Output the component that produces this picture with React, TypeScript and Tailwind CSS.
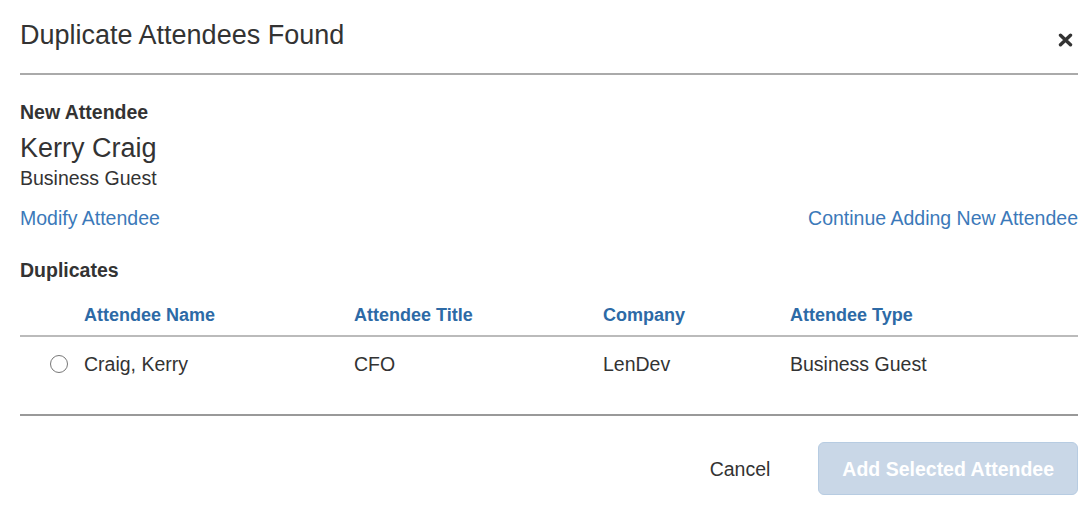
import { useState } from "react";

type Duplicate = {
  name: string;
  title: string;
  company: string;
  type: string;
};

const duplicates: Duplicate[] = [
  { name: "Craig, Kerry", title: "CFO", company: "LenDev", type: "Business Guest" }
];

const gridCols = "grid grid-cols-[64px_270px_249px_187px_1fr]";

function CloseIcon() {
  return (
    <svg aria-hidden="true" className="h-[14px] w-[15px]" viewBox="0 0 15 14">
      <path
        d="M2.5 2.2 L12.5 11.8 M12.5 2.2 L2.5 11.8"
        fill="none"
        stroke="#333333"
        strokeLinecap="round"
        strokeWidth="3.4"
      />
    </svg>
  );
}

export default function App() {
  const [selected, setSelected] = useState<number | null>(null);

  return (
    <div className="min-h-screen bg-white pl-[20px] pr-[9px] font-['Liberation_Sans',Arial,sans-serif] text-[#333333]">
      <div className="flex items-start justify-between border-b-2 border-[#aaaaaa] pb-[22px] pt-[19px]">
        <h1 className="text-[27px] leading-[32px]">Duplicate Attendees Found</h1>
        <button className="mr-[5px] mt-[14px]" type="button" aria-label="Close">
          <CloseIcon />
        </button>
      </div>

      <p className="mt-[26px] text-[19.5px] font-bold leading-[22px]">New Attendee</p>
      <p className="mt-[9px] text-[27px] leading-[33px]">Kerry Craig</p>
      <p className="mt-[2px] text-[19.5px] leading-[22px]">Business Guest</p>

      <div className="mt-[18px] flex justify-between text-[19.5px] leading-[22px] text-[#3b79b9]">
        <a href="#">Modify Attendee</a>
        <a href="#">Continue Adding New Attendee</a>
      </div>

      <p className="mt-[30px] text-[19.5px] font-bold leading-[22px]">Duplicates</p>

      <div className="mt-[23px]">
        <div
          className={`${gridCols} border-b-2 border-[#bbbbbb] pb-[9px] text-[18px] font-bold leading-[22px] text-[#2d6aa6]`}
        >
          <span />
          <span>Attendee Name</span>
          <span>Attendee Title</span>
          <span>Company</span>
          <span>Attendee Type</span>
        </div>

        {duplicates.map((row, index) => (
          <label
            className={`${gridCols} items-center pb-[39px] pt-[16px] text-[19.5px] leading-[22px]`}
            key={row.name}
          >
            <span className="flex pl-[30px]">
              <input
                checked={selected === index}
                className="peer sr-only"
                name="duplicate"
                onChange={() => setSelected(index)}
                type="radio"
              />
              <span className="flex h-[18px] w-[18px] items-center justify-center rounded-full border-[1.5px] border-[#777777] bg-white">
                {selected === index ? (
                  <span className="h-[8px] w-[8px] rounded-full bg-[#333333]" />
                ) : null}
              </span>
            </span>
            <span>{row.name}</span>
            <span>{row.title}</span>
            <span>{row.company}</span>
            <span>{row.type}</span>
          </label>
        ))}
      </div>

      <div className="flex items-center justify-end gap-[48px] border-t-2 border-[#999999] pt-[26px]">
        <button className="text-[19.5px] leading-[22px] text-[#333333]" type="button">
          Cancel
        </button>
        <button
          className="h-[53px] rounded-[6px] border border-[#b7cce2] bg-[#c9d7e7] px-[23px] text-[19.5px] font-bold leading-[22px] text-white"
          disabled={selected === null}
          type="button"
        >
          Add Selected Attendee
        </button>
      </div>
    </div>
  );
}
